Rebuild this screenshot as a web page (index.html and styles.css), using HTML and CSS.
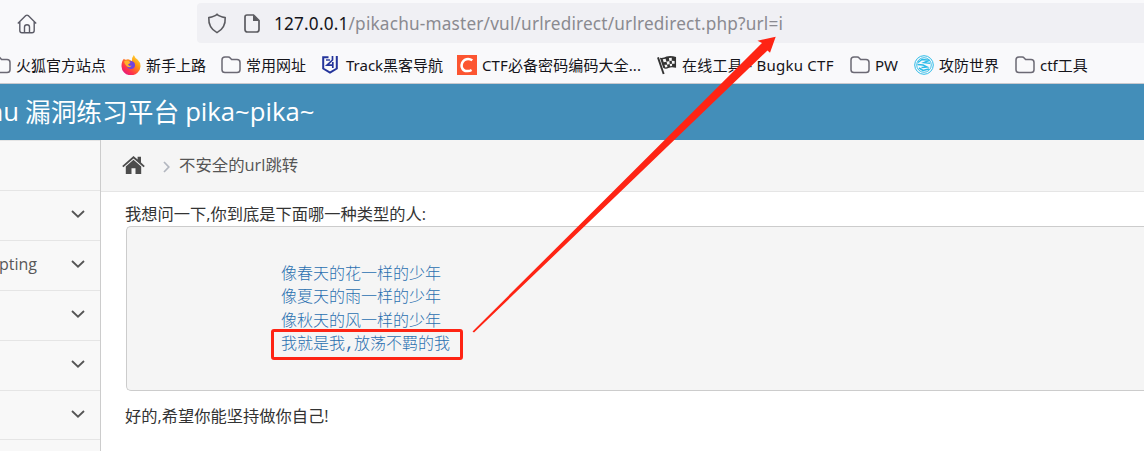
FILE: index.html
```html
<!DOCTYPE html>
<html lang="zh-CN">
<head>
<meta charset="utf-8">
<title>不安全的url跳转</title>
<link rel="stylesheet" href="styles.css">
</head>
<body>
<svg class="defs" width="0" height="0"><defs>
<symbol id="folder" viewBox="0 0 20 18"><path d="M1 4Q1 1 4 1H7.2Q8.5 1 9.2 2L10.6 3.6H16Q19 3.6 19 6.5V13.7Q19 16.5 16 16.5H4Q1 16.5 1 13.7Z" fill="none" stroke="#6b6974" stroke-width="1.5"/></symbol>
<symbol id="chev" viewBox="0 0 14 8"><path d="M1 1L7 6.7L13 1" fill="none" stroke="#555" stroke-width="1.8"/></symbol>
</defs></svg>
<div class="toolbar">
  <svg class="home" width="20" height="20" viewBox="0 0 20 20" fill="none" stroke="#5b5b66" stroke-width="1.4"><path d="M.8 9.5L8.8 1.6Q10 .6 11.2 1.6L19.2 9.5M2.8 8V16.5Q2.8 18.7 5 18.7H15Q17.2 18.7 17.2 16.5V8M7.5 18.5V13Q7.5 10.7 10 10.7Q12.5 10.7 12.5 13V18.5"/></svg>
  <div class="urlbar">
    <svg class="shield" width="20" height="21" viewBox="0 0 20 21"><path d="M10 1.2Q12 3.4 18.2 4.6Q18.8 15 10 19.6Q1.2 15 1.8 4.6Q8 3.4 10 1.2Z" fill="none" stroke="#5b5b60" stroke-width="1.6" stroke-linejoin="round"/></svg>
    <svg class="page" width="16" height="19" viewBox="0 0 16 19"><path d="M3 1H9.5L15 6.5V15.5Q15 18 12.5 18H3.5Q1 18 1 15.5V3Q1 1 3 1Z" fill="none" stroke="#5b5b60" stroke-width="1.7"/><path d="M9 1L15 7H9Z" fill="#5b5b60"/></svg>
    <span class="url"><b>127.0.0.1</b>/pikachu-master/vul/urlredirect/urlredirect.php?url=i</span>
  </div>
</div>
<div class="bookmarks">
  <div class="bm w1"><svg class="ico"><use href="#folder"/></svg><span>火狐官方站点</span></div>
  <div class="bm w2"><svg class="ico fx" viewBox="0 0 20 20"><defs><linearGradient id="g" x1="1" y1="0" x2=".2" y2="1"><stop offset="0" stop-color="#fff44f"/><stop offset=".4" stop-color="#ff980e"/><stop offset=".75" stop-color="#ff3647"/><stop offset="1" stop-color="#e31587"/></linearGradient></defs><path d="M12.8 0Q14 3 16.5 4.5Q19.7 7.5 19.5 11.5A9.5 9 0 0 1 .5 11Q.5 6 3 3.7Q3.5 5 5 4.8Q7 4 8 4.6L11 6Q11 2 12.8 0Z" fill="url(#g)"/><path d="M8 6Q14.5 5.5 14 11Q13 14.5 9.5 14Q5.5 13.5 5.7 10L8.7 8.6Z" fill="#7144df"/><path d="M3 6.5Q5 4.8 8 6L9.5 7.5L7 9.6Q8 11.7 10.7 10.5Q9 13.5 6 11.5Q3.5 9.5 3 6.5Z" fill="#ffb22c"/></svg><span>新手上路</span></div>
  <div class="bm w3"><svg class="ico"><use href="#folder"/></svg><span>常用网址</span></div>
  <div class="bm w4"><svg class="ico track" viewBox="0 0 16 18"><path d="M6.5 1.2H1.2V12.5L8 16.5L14.8 12.5V0" fill="none" stroke="#24349b" stroke-width="2"/><path d="M10.5 0V4L5 9.2H11M10.8 6V12" fill="none" stroke="#24349b" stroke-width="1.7"/><path d="M4 4H8" stroke="#24349b" stroke-width="1.4"/></svg><span class="t-track">Track黑客导航</span></div>
  <div class="bm w5"><svg class="ico" viewBox="0 0 20 20"><path d="M0 0H20V20H0Z" fill="#fc5531"/><path d="M15.3 5.3Q11.5 2.8 7.8 4.8Q4.2 7.5 4.7 11.8Q6 16.3 10.8 16.1Q12.8 16 14.6 15" fill="none" stroke="#fff" stroke-width="2.5"/></svg><span class="t-ctf">CTF必备密码编码大全...</span></div>
  <div class="bm w6"><svg class="ico flag" viewBox="0 0 21 20"><path d="M1 2L7 19.5" stroke="#333" stroke-width="2"/><path d="M3 2.5Q7 3 10 1.2Q14 0 20 1.5V13Q15 11.5 12 13.2Q9 15 6.5 13Z" fill="#333"/><path d="M6 4L9 3.5L10 6.5L7 7ZM12.5 2.7L15.5 2.5V5.5L13 5.7ZM10 6.5L13 5.7L13.3 9L10.8 9.8ZM15.5 5.5L18.5 5.7V8.8L15.8 8.6ZM7.8 9.8L10.5 9.8L11 12L8.7 12.6ZM13.3 9L15.8 8.6V11L13.7 11.4Z" fill="#f5f5f5"/></svg><span class="t-bug">在线工具 - Bugku CTF</span></div>
  <div class="bm w7"><svg class="ico"><use href="#folder"/></svg><span class="t-pw">PW</span></div>
  <div class="bm w8"><svg class="ico" viewBox="0 0 20 20" fill="none" stroke="#2cbbe8"><circle cx="10" cy="10" r="9.3" stroke-width="1"/><circle cx="10" cy="10" r="7.3" stroke-width=".9"/><path d="M4 7.5L8 4.5L15.5 5.2L10 7.5L16 8.3M3.5 9.5L9 10L13 12L7.5 12.5M5 13L9 15.5L15 14" stroke-width="1.5"/></svg><span>攻防世界</span></div>
  <div class="bm"><svg class="ico"><use href="#folder"/></svg><span class="t-tool">ctf工具</span></div>
</div>
<div class="brand"><span class="brand-a">Pikachu</span><span class="brand-b">漏洞练习平台</span><span class="brand-c">pika~pika~</span></div>
<div class="main">
  <div class="side">
    <div class="row first"></div>
    <div class="row"><svg class="chev"><use href="#chev"/></svg></div>
    <div class="row"><span class="label">Cross-Site Scripting</span><svg class="chev"><use href="#chev"/></svg></div>
    <div class="row"><svg class="chev"><use href="#chev"/></svg></div>
    <div class="row"><svg class="chev"><use href="#chev"/></svg></div>
    <div class="row short"><svg class="chev"><use href="#chev"/></svg></div>
    <div class="row"></div>
  </div>
  <div class="content">
    <div class="crumbs">
      <svg width="23" height="19" viewBox="0 0 23 19" fill="#4c4c4c"><path d="M11.5 3.8L19.2 10.5V18H13.5V12.3H9.5V18H3.8V10.5Z"/><path d="M11.5 0L15.6 3.6V.8H19V6.6L22.8 9.9L21.6 11.2L11.5 2.5L1.4 11.2L.2 9.9Z"/></svg>
      <svg class="sep" width="7" height="12" viewBox="0 0 7 12"><path d="M1 1L5.8 6L1 11" fill="none" stroke="#b2b6bf" stroke-width="1.7"/></svg>
      <span class="crumb">不安全的url跳转</span>
    </div>
    <div class="body">
      <p class="q">我想问一下,你到底是下面哪一种类型的人:</p>
      <div class="pre">
        <a>像春天的花一样的少年</a>
        <a>像夏天的雨一样的少年</a>
        <a>像秋天的风一样的少年</a>
        <a>我就是我<i>,</i>放荡不羁的我</a>
      </div>
      <p class="a">好的,希望你能坚持做你自己!</p>
    </div>
  </div>
</div>
<svg class="marks" width="1144" height="451" viewBox="0 0 1144 451"><rect x="272.5" y="330.5" width="189" height="28" rx="1.5" fill="none" stroke="#fe2414" stroke-width="3"/><path d="M472.5 331.5L762 43L757.5 40.7L775.7 36.8L770 52.7L767.5 50.5L474 332.5Z" fill="#fe2414"/></svg>
</body>
</html>
```
FILE: styles.css
```css
* { box-sizing: border-box; }
body { margin: 0; width: 1144px; height: 451px; overflow: hidden; background: #fff; color: #333; font-family: "Open Sans", "Noto Sans CJK SC", sans-serif; }
.defs { position: absolute; }
.toolbar { height: 46px; background: #f9f9fb; display: flex; padding: 3px 0 3px 17px; }
.home { margin: 11px 160px 0 0; flex: none; }
.urlbar { flex: 1; background: #f0f0f4; border-radius: 4px 0 0 4px; display: flex; align-items: center; padding-left: 10px; }
.shield { margin-right: 17px; }
.page { margin-right: 14px; }
.url { font-family: "Noto Sans", sans-serif; font-size: 17.2px; letter-spacing: .19px; color: #8a8a90; white-space: nowrap; }
.url b { font-weight: 400; color: #15141a; }
.bookmarks { height: 38px; background: #f9f9fb; border-bottom: 1px solid #c9c9ce; display: flex; padding-left: 0; }
.bm { display: flex; align-items: center; gap: 5px; flex: none; white-space: nowrap; font: 15px/20px "Noto Sans", "Noto Sans CJK SC", sans-serif; color: #15141a; }
.ico { width: 20px; height: 18px; flex: none; }
.w1 { width: 130px; margin-left: -9px; } .w2 { width: 100px; } .w3 { width: 101px; } .w4 { width: 135px; }
.w5 { width: 200px; } .w6 { width: 193px; } .w7 { width: 64px; } .w8 { width: 101px; }
.w5 .ico, .w8 .ico, .fx, .flag { height: 20px; }
.w4 .ico { width: 16px; margin-right: 3px; }
.t-bug { letter-spacing: .25px; }
.t-ctf { letter-spacing: .1px; }
.brand { height: 56px; background: #438eb9; color: #fff; display: flex; align-items: center; font-size: 25.7px; white-space: nowrap; padding-bottom: 2px; }
.brand-a { width: 19px; display: flex; justify-content: flex-end; margin-right: 6px; }
.brand-b { margin-right: 6px; }
.main { display: flex; height: 311px; }
.side { width: 101px; border-right: 1px solid #ccc; background: #f8f8f8; overflow: hidden; }
.row { height: 50px; border-bottom: 1px solid #e5e5e5; display: flex; align-items: center; justify-content: flex-end; padding: 0 15px 3px 0; font-size: 16px; color: #585858; }
.first { height: 51px; border-top: 1px solid #e5e5e5; }
.short { height: 49px; }
.chev { width: 14px; height: 8px; flex: none; }
.label { white-space: nowrap; margin-right: 34px; }
.content { flex: 1; }
.crumbs { height: 52px; background: #f5f5f5; border-bottom: 1px solid #e5e5e5; padding-left: 21px; display: flex; align-items: center; font-size: 16.4px; color: #555; }
.crumb { padding-bottom: 3px; }
.sep { margin: 3px 9px 0 18px; }
.body { padding: 11px 0 0 24px; }
p { margin: 0; font-size: 16.25px; line-height: 23px; white-space: nowrap; }
.pre { height: 165px; margin-left: 1px; border: 1px solid #ccc; border-right: 0; border-radius: 5px 0 0 5px; background: #f5f5f5; padding: 34px 0 0 154px; font: 300 16px/23.3px "Noto Sans CJK SC", sans-serif; color: #2a70b0; }
.pre a { display: block; }
.pre i { display: inline-block; width: 9px; font: 400 16px/20px "Liberation Mono", monospace; }
.a { margin-top: 14px; }
.marks { position: absolute; left: 0; top: 0; }
```
